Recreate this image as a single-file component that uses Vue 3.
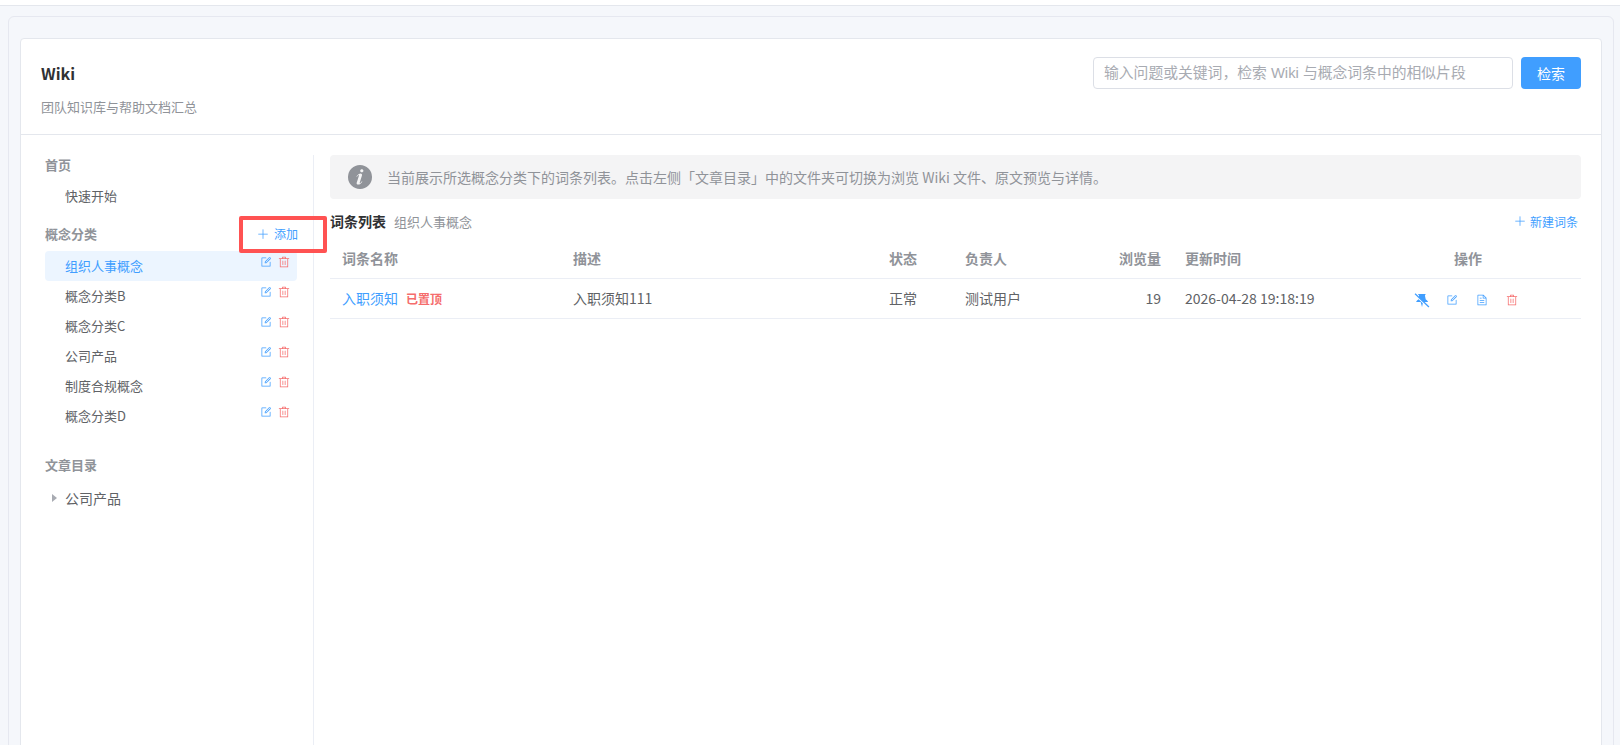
<script setup>
import { ref } from 'vue'

const icons = {
  plus: 'M480 480V128a32 32 0 0 1 64 0v352h352a32 32 0 1 1 0 64H544v352a32 32 0 1 1-64 0V544H128a32 32 0 0 1 0-64z',
  edit: 'M832 512a32 32 0 1 1 64 0v352a32 32 0 0 1-32 32H160a32 32 0 0 1-32-32V160a32 32 0 0 1 32-32h352a32 32 0 0 1 0 64H192v640h640zm-362.048 42.24 52.8-7.552L847.104 222.4a32 32 0 1 0-45.248-45.248L477.44 501.44l-7.552 52.8zm422.4-422.4a96 96 0 0 1 0 135.808l-331.84 331.84a32 32 0 0 1-18.112 9.088L436.8 623.68a32 32 0 0 1-36.224-36.224l15.104-105.6a32 32 0 0 1 9.024-18.112l331.904-331.84a96 96 0 0 1 135.744 0z',
  trash: 'M160 256H96a32 32 0 0 1 0-64h256V95.936a32 32 0 0 1 32-32h256a32 32 0 0 1 32 32V192h256a32 32 0 1 1 0 64h-64v672a32 32 0 0 1-32 32H192a32 32 0 0 1-32-32zm448-64v-64H416v64zM224 896h576V256H224zm192-128a32 32 0 0 1-32-32V416a32 32 0 0 1 64 0v320a32 32 0 0 1-32 32m192 0a32 32 0 0 1-32-32V416a32 32 0 0 1 64 0v320a32 32 0 0 1-32 32',
  doc: 'M832 384H576V128H192v768h640zm-26.496-64L640 154.496V320zM160 64h480l256 256v608a32 32 0 0 1-32 32H160a32 32 0 0 1-32-32V96a32 32 0 0 1 32-32m160 448h384v64H320zm0-192h160v64H320zm0 384h384v64H320z',
  info: 'M512 64a448 448 0 1 1 0 896.064A448 448 0 0 1 512 64m67.2 275.072c33.28 0 60.288-23.104 60.288-57.344s-27.072-57.344-60.288-57.344c-33.28 0-60.16 23.104-60.16 57.344s26.88 57.344 60.16 57.344M591.04 699.904c0-6.848 2.368-24.64 1.024-34.752l-52.608 60.544c-10.88 11.456-24.512 19.392-30.912 17.28a12.992 12.992 0 0 1-8.256-14.72l87.68-276.992c7.168-35.136-12.544-67.2-54.336-71.296-44.096 0-108.992 44.736-148.48 101.504 0 6.784-1.28 23.68.064 33.792l52.544-60.608c10.88-11.328 23.552-19.328 29.952-17.152a12.8 12.8 0 0 1 7.808 16.128L388.48 728.576c-10 30.656 8.96 60.8 54.848 67.904 67.392 0 107.2-43.328 147.712-96.576z',
}

const categories = ['组织人事概念', '概念分类B', '概念分类C', '公司产品', '制度合规概念', '概念分类D']
const active = ref('组织人事概念')
</script>

<template>
  <div class="page">
    <div class="topbar"></div>
    <div class="outer">
      <div class="card">
        <header class="head">
          <div>
            <h1 class="title">Wiki</h1>
            <p class="subtitle">团队知识库与帮助文档汇总</p>
          </div>
          <div class="search">
            <input class="search-input" placeholder="输入问题或关键词，检索 Wiki 与概念词条中的相似片段">
            <button class="search-btn">检索</button>
          </div>
        </header>

        <div class="body">
          <aside class="side">
            <div class="side-label">首页</div>
            <div class="side-link">快速开始</div>

            <div class="side-label cat-label">
              <span>概念分类</span>
              <span class="add-wrap">
                <span class="add">
                  <svg class="ico plus" viewBox="0 0 1024 1024"><path :d="icons.plus" /></svg>添加
                </span>
                <i class="mark"></i>
              </span>
            </div>
            <ul class="cats">
              <li v-for="c in categories" :key="c" class="cat" :class="{ on: c === active }" @click="active = c">
                <span>{{ c }}</span>
                <span class="cat-ops">
                  <svg class="ico blue" viewBox="0 0 1024 1024"><path :d="icons.edit" /></svg>
                  <svg class="ico red" viewBox="0 0 1024 1024"><path :d="icons.trash" /></svg>
                </span>
              </li>
            </ul>

            <div class="side-label toc-label">文章目录</div>
            <div class="tree-node"><i class="caret"></i>公司产品</div>
          </aside>

          <main class="main">
            <div class="alert">
              <svg class="alert-ico" viewBox="64 64 896 896"><path :d="icons.info" /></svg>
              <span>当前展示所选概念分类下的词条列表。点击左侧「文章目录」中的文件夹可切换为浏览 Wiki 文件、原文预览与详情。</span>
            </div>

            <div class="list-head">
              <div><b class="list-title">词条列表</b><span class="list-sub">组织人事概念</span></div>
              <span class="new">
                <svg class="ico plus" viewBox="0 0 1024 1024"><path :d="icons.plus" /></svg>新建词条
              </span>
            </div>

            <div class="grid grid-head">
              <div>词条名称</div>
              <div>描述</div>
              <div>状态</div>
              <div>负责人</div>
              <div class="num">浏览量</div>
              <div>更新时间</div>
              <div class="center">操作</div>
            </div>
            <div class="grid grid-row">
              <div><span class="link">入职须知</span><span class="pinned">已置顶</span></div>
              <div>入职须知111</div>
              <div>正常</div>
              <div>测试用户</div>
              <div class="num">19</div>
              <div>2026-04-28 19:18:19</div>
              <div class="row-ops">
                <svg class="pin-ico" viewBox="0 0 16 16">
                  <path d="M3.6 1h8.4l-.9 1.6.9 4.2c1.4.7 2.2 1.6 2.4 2.8H1.8c.2-1.2 1-2.1 2.4-2.8l.7-4.2z" fill="#409eff" />
                  <path d="M6.6 9.6h2.6L8 15z" fill="#409eff" />
                  <path d="M1 2.4 14.4 15.2" stroke="#fff" stroke-width="1.6" />
                  <path d="M.6 .8 15.4 15" stroke="#409eff" stroke-width="1.3" />
                </svg>
                <svg class="ico blue" viewBox="0 0 1024 1024"><path :d="icons.edit" /></svg>
                <svg class="ico blue" viewBox="0 0 1024 1024"><path :d="icons.doc" /></svg>
                <svg class="ico red" viewBox="0 0 1024 1024"><path :d="icons.trash" /></svg>
              </div>
            </div>
          </main>
        </div>
      </div>
    </div>
  </div>
</template>

<style>
html, body { overflow: hidden; }
body { background: #f5f7fb; }
</style>

<style scoped>
* { box-sizing: border-box; }
.page {
  height: 745px; overflow: hidden; background: #f5f7fb; color: #606266;
  font-family: "Noto Sans CJK SC", "Noto Sans", sans-serif; font-size: 13px;
}
.topbar { height: 6px; background: #fff; border-bottom: 1px solid #e4e7ed; }
.outer {
  margin: 10px 6px 0 8px; padding: 21px 11px 0; height: 800px;
  border: 1px solid #e6e8f0; border-radius: 6px; background: #f5f7fb;
}
.card {
  height: 800px; background: #fff;
  border: 1px solid #e4e7ed; border-radius: 4px;
}

.head {
  height: 96px; display: flex; justify-content: space-between; align-items: flex-start;
  padding: 18px 20px 0; border-bottom: 1px solid #e4e7ed;
}
.title { margin: 2px 0 0; font-size: 16px; line-height: 28px; font-weight: 600; color: #303133; }
.subtitle { margin: 11px 0 0; font-size: 13px; line-height: 18px; color: #909399; }
.search { display: flex; gap: 8px; }
.search-input {
  width: 420px; height: 32px; padding: 0 10px; outline: none;
  border: 1px solid #dcdfe6; border-radius: 4px; background: #fff;
  font-family: "Liberation Sans", "Noto Sans CJK SC", sans-serif; font-size: 14.8px; color: #606266;
}
.search-input::placeholder { color: #a8abb2; opacity: 1; }
.search-btn {
  width: 60px; height: 32px; padding: 0; border: 0; border-radius: 4px;
  background: #409eff; color: #fff; font-family: inherit; font-size: 14px;
}

.body { display: flex; padding-top: 20px; }
.side { width: 293px; flex: none; min-height: 640px; padding: 0 16px 0 24px; border-right: 1px solid #ebeef5; }
.side-label { font-size: 13px; line-height: 20px; font-weight: 600; color: #909399; }
.side-link { margin-top: 11px; padding-left: 20px; line-height: 20px; color: #606266; }
.cat-label { margin-top: 18px; display: flex; justify-content: space-between; }
.add-wrap { position: relative; display: block; margin-right: -1px; }
.add { display: flex; align-items: center; font-size: 12px; font-weight: 400; color: #409eff; }
.add .plus { margin-right: 5px; }
.mark {
  position: absolute; left: -18px; right: -29px; top: -8px; height: 37px;
  border: 4.5px solid #ff5252; border-radius: 2px;
}
.ico { width: 12px; height: 12px; flex: none; fill: currentColor; }
.blue { color: #409eff; }
.red { color: #f56c6c; }
.cats { list-style: none; margin: 7px 0 0; padding: 0; }
.cat {
  height: 30px; padding: 0 7px 0 20px; display: flex; justify-content: space-between;
  line-height: 30px; border-radius: 4px; color: #606266;
}
.cat.on { background: #ecf5ff; color: #409eff; }
.cat-ops { display: flex; gap: 6px; padding-top: 5px; height: 20px; }
.toc-label { margin-top: 24px; }
.tree-node { margin-top: 13px; font-size: 14px; line-height: 20px; padding-left: 7px; display: flex; align-items: center; color: #606266; }
.caret {
  width: 0; height: 0; margin-right: 8px;
  border-left: 5px solid #a8abb2; border-top: 4px solid transparent; border-bottom: 4px solid transparent;
}

.main { flex: 1; padding: 0 20px 0 16px; min-width: 0; }
.alert {
  height: 44px; display: flex; align-items: center; padding-left: 18px;
  background: #f4f4f5; border-radius: 4px; color: #909399; font-size: 14px;
}
.alert-ico { width: 24px; height: 24px; margin-right: 15px; fill: #909399; }
.list-head { margin-top: 12px; height: 20px; display: flex; justify-content: space-between; align-items: center; }
.list-title { font-size: 14px; font-weight: 700; color: #303133; }
.list-sub { margin-left: 8px; font-size: 13px; color: #909399; }
.new { display: flex; align-items: center; padding-right: 3px; font-size: 12px; color: #409eff; }
.new .plus { margin-right: 4px; }

.grid {
  display: grid; grid-template-columns: 231px 316px 76px 95px 125px 180px 228px;
  align-items: center; border-bottom: 1px solid #ebeef5;
}
.grid > div { padding: 0 12px; }
.grid-head { height: 41px; margin-top: 7px; font-size: 14px; font-weight: 600; color: #909399; }
.grid-row { height: 40px; font-size: 14px; color: #606266; }
.grid-row > div { padding-bottom: 2px; }
.num { text-align: right; }
.center { text-align: center; transform: translateX(1px); }
.link { color: #409eff; }
.pinned { margin-left: 8px; font-size: 12px; font-weight: 600; color: #f56c6c; }
.row-ops { display: flex; align-items: center; padding: 0 !important; margin: 3px 0 0 61px; }
.pin-ico { width: 16px; height: 15px; margin-right: 16px; }
.row-ops .ico { margin-right: 18px; }
</style>
